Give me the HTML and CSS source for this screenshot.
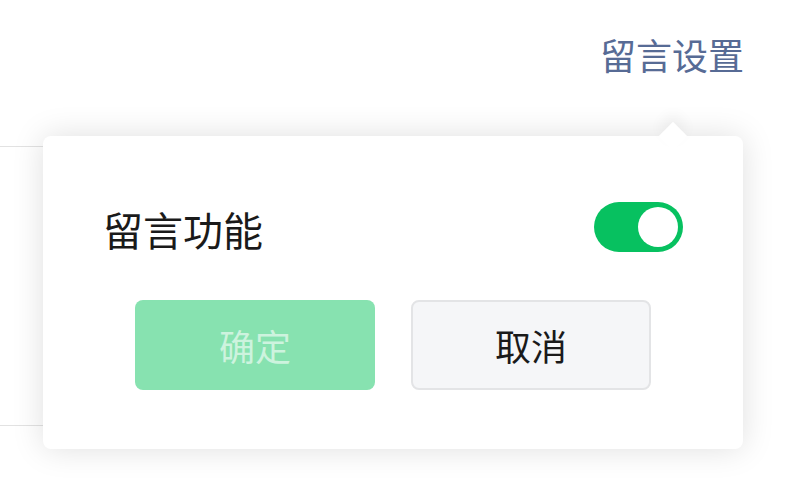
FILE: index.html
```html
<!DOCTYPE html>
<html lang="zh-CN">
<head>
<meta charset="utf-8">
<link rel="stylesheet" href="styles.css">
</head>
<body>
<div class="page">
  <header class="header">
    <span class="title">留言设置</span>
  </header>
  <div class="panel"></div>
  <div class="popover">
    <span class="arrow"></span>
    <div class="row">
      <span class="label">留言功能</span>
      <span class="switch"><span class="knob"></span></span>
    </div>
    <div class="actions">
      <button class="btn btn-primary">确定</button>
      <button class="btn btn-default">取消</button>
    </div>
  </div>
</div>
</body>
</html>
```
FILE: styles.css
```css
html, body {
  margin: 0;
  padding: 0;
  background: #ffffff;
}
body {
  font-family: "Noto Sans CJK SC", "Noto Sans", sans-serif;
  width: 809px;
  height: 494px;
  overflow: hidden;
}
.page {
  position: relative;
  width: 809px;
  height: 494px;
}
.header {
  display: flex;
  justify-content: flex-end;
  padding: 29px 65px 0 0;
  height: 50px;
}
.title {
  font-size: 36px;
  line-height: 50px;
  color: #576b95;
}
.panel {
  margin-top: 67px;
  width: 700px;
  height: 278px;
  border-top: 1px solid #e2e2e2;
  border-bottom: 1px solid #e2e2e2;
}
.popover {
  position: absolute;
  left: 43px;
  top: 136px;
  width: 700px;
  box-sizing: border-box;
  padding: 66px 60px 59px 60px;
  background: #ffffff;
  border-radius: 8px;
  box-shadow: 0 0 32px rgba(0, 0, 0, 0.13);
}
.arrow {
  position: absolute;
  top: -10px;
  left: 620px;
  width: 20px;
  height: 20px;
  background: #ffffff;
  transform: rotate(45deg);
  box-shadow: -6px -6px 14px rgba(0, 0, 0, 0.05);
}
.row {
  position: relative;
  display: flex;
  align-items: center;
  justify-content: space-between;
  height: 50px;
}
.label {
  font-size: 40px;
  line-height: 50px;
  color: #1a1a1a;
  margin-top: 4px;
}
.switch {
  display: flex;
  align-items: center;
  justify-content: flex-end;
  width: 89px;
  height: 50px;
  box-sizing: border-box;
  padding-right: 5px;
  border-radius: 25px;
  background: #07c160;
}
.knob {
  width: 40px;
  height: 40px;
  border-radius: 50%;
  background: #ffffff;
}
.actions {
  position: relative;
  display: flex;
  justify-content: center;
  gap: 36px;
  margin-top: 48px;
}
.btn {
  width: 240px;
  height: 90px;
  box-sizing: border-box;
  border-radius: 8px;
  font-family: "Noto Sans CJK SC", "Noto Sans", sans-serif;
  font-size: 36px;
  padding: 0;
  margin: 0;
}
.btn-primary {
  background: #87e2b0;
  border: none;
  color: #cdf3de;
}
.btn-default {
  background: #f5f6f8;
  border: 2px solid #e3e4e6;
  color: #1a1a1a;
}
```
